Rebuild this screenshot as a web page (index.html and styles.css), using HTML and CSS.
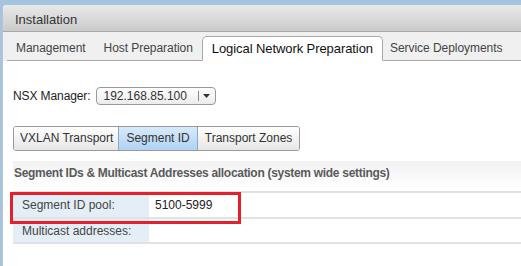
FILE: index.html
```html
<!DOCTYPE html>
<html>
<head>
<meta charset="utf-8">
<link rel="stylesheet" href="styles.css">
</head>
<body>
<div class="window">
  <div class="titlebar">Installation</div>
  <div class="tabs">
    <div class="tab first">Management</div>
    <div class="tab">Host Preparation</div>
    <div class="tab active">Logical Network Preparation</div>
    <div class="tab last">Service Deployments</div>
    <div class="tab-fill"></div>
  </div>
  <div class="content">
    <div class="manager-row">
      <span class="manager-label">NSX Manager:</span>
      <div class="dropdown">
        <span class="dropdown-value">192.168.85.100</span>
        <span class="dropdown-btn"><svg width="7" height="4" viewBox="0 0 7 4"><path d="M0 0H7L3.5 4Z" fill="#333"/></svg></span>
      </div>
    </div>
    <div class="btn-group">
      <div class="btn">VXLAN Transport</div>
      <div class="btn selected">Segment ID</div>
      <div class="btn">Transport Zones</div>
    </div>
    <div class="section-header">Segment IDs &amp; Multicast Addresses allocation (system wide settings)</div>
    <div class="props">
      <div class="row">
        <div class="label">Segment ID pool:</div>
        <div class="value">5100-5999</div>
      </div>
      <div class="row">
        <div class="label">Multicast addresses:</div>
        <div class="value"></div>
      </div>
      <div class="highlight"></div>
    </div>
  </div>
</div>
</body>
</html>
```

FILE: styles.css
```css
html, body {
  margin: 0;
  padding: 0;
}
body {
  background: #a5c4e0;
  font-family: "Liberation Sans", Arial, sans-serif;
  width: 521px;
  height: 266px;
  overflow: hidden;
}
.window {
  margin: 5px 0 0 2px;
  height: 261px;
  background: #fff;
  border-top-left-radius: 4px;
  overflow: hidden;
  border-left: 1px solid #b8c4cf;
  box-sizing: border-box;
}
.titlebar {
  height: 27px;
  box-sizing: border-box;
  padding: 7px 0 0 12px;
  font-size: 13px;
  color: #333;
  background: linear-gradient(#e9e9e9, #cbcbcb);
  border-bottom: 1px solid #a9a9a9;
}
.tabs {
  display: flex;
  align-items: flex-end;
  height: 29px;
  background: #f0f0f0;
}
.tab {
  font-size: 12px;
  color: #444;
  padding: 0 9px;
  height: 23px;
  line-height: 23px;
  letter-spacing: -0.05px;
  border-bottom: 1px solid #a9a9a9;
}
.tab.first {
  margin-left: 4px;
}
.tab.last {
  padding-left: 7px;
}
.tab-fill {
  flex: 1;
  border-bottom: 1px solid #a9a9a9;
}
.tab.active {
  font-size: 13px;
  color: #111;
  letter-spacing: -0.08px;
  background: #fff;
  border: 1px solid #a9a9a9;
  border-bottom: 1px solid #fff;
  border-radius: 5px 5px 0 0;
  height: 22px;
  line-height: 21px;
  padding-top: 1px;
}
.content {
  padding: 0 10px 0 10px;
}
.manager-row {
  display: flex;
  align-items: center;
  margin-top: 26px;
  height: 18px;
}
.manager-label {
  font-size: 12px;
  color: #222;
  letter-spacing: -0.1px;
}
.dropdown {
  margin-left: 5px;
  display: flex;
  align-items: stretch;
  height: 18px;
  width: 120px;
  box-sizing: border-box;
  border: 1px solid #9a9a9a;
  border-radius: 4px;
  background: linear-gradient(#ffffff, #ececec);
}
.dropdown-value {
  flex: 1;
  font-size: 12px;
  color: #333;
  padding-left: 7px;
  line-height: 16px;
}
.dropdown-btn {
  width: 17px;
  display: flex;
  align-items: center;
  justify-content: center;
  position: relative;
}
.dropdown-btn::before {
  content: "";
  display: block;
  position: absolute;
  left: 0;
  top: 3px;
  bottom: 3px;
  border-left: 1px solid #888;
}
.btn-group {
  display: inline-flex;
  margin-top: 21px;
  height: 25px;
  border: 1px solid #9a9a9a;
  border-radius: 3px;
  overflow: hidden;
  box-sizing: border-box;
}
.btn {
  font-size: 12px;
  color: #333;
  padding: 0 7px;
  line-height: 23px;
  background: linear-gradient(#ffffff, #e6e6e6);
  border-left: 1px solid #9a9a9a;
}
.btn:first-child {
  border-left: none;
  padding: 0 5px 0 6px;
}
.btn.selected {
  background: linear-gradient(#d8eafb, #b1d2f3);
  border-left-color: #86a9cc;
}
.btn.selected + .btn {
  border-left-color: #86a9cc;
}
.section-header {
  margin-top: 10px;
  height: 26px;
  line-height: 24px;
  padding-left: 1px;
  font-size: 12px;
  font-weight: bold;
  letter-spacing: -0.3px;
  color: #5a5a5a;
  background: linear-gradient(#f2f2f2, #ffffff);
  margin-right: -10px;
  white-space: nowrap;
}
.props {
  position: relative;
  margin-top: 4px;
  margin-right: -10px;
  border-top: 2px solid #e2e2e2;
}
.row {
  display: flex;
  height: 26px;
  border-bottom: 2px solid #e2e2e2;
  box-sizing: border-box;
}
.row + .row {
  height: 25px;
}
.label {
  width: 136px;
  background: #e4eef6;
  font-size: 12px;
  color: #444;
  padding-left: 9px;
  box-sizing: border-box;
  line-height: 24px;
}
.value {
  flex: 1;
  font-size: 12px;
  color: #222;
  padding-left: 6px;
  line-height: 24px;
}
.highlight {
  position: absolute;
  left: -3px;
  top: -1px;
  width: 231px;
  height: 32px;
  box-sizing: border-box;
  border: 3px solid #e5202c;
}
```
